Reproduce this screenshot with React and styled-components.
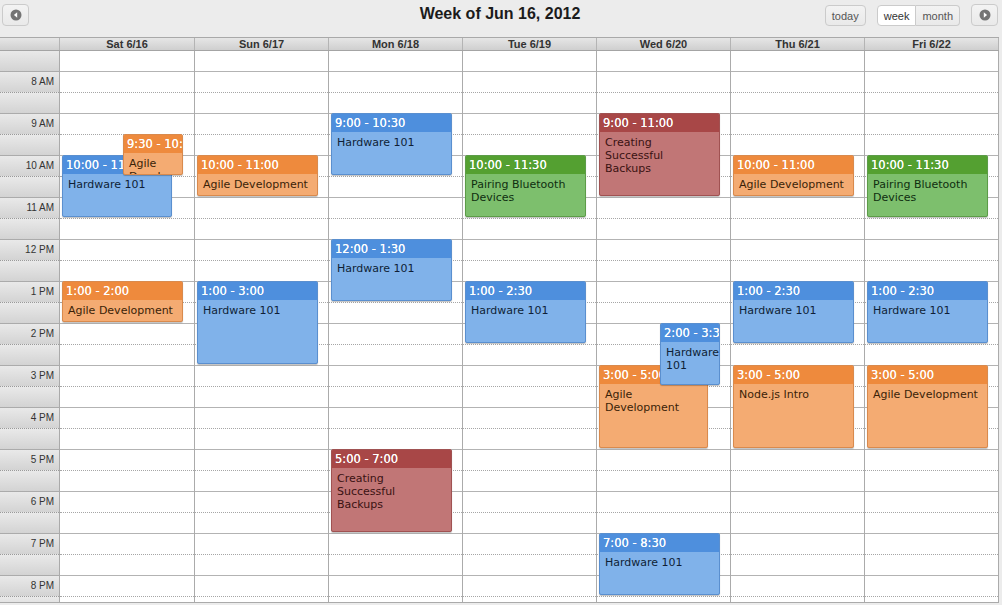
import React from "react";
import styled, { createGlobalStyle } from "styled-components";

const GlobalStyle = createGlobalStyle`
  html, body {
    margin: 0;
    padding: 0;
    background: #ececec;
  }
  body {
    font-family: "Liberation Sans", Arial, sans-serif;
  }
`;

const palette = {
  blue: { head: "#4e8fdd", body: "#80b2ea", edge: "#5a8fcf", text: "#0f1f36" },
  orange: { head: "#ee8a3d", body: "#f4ab72", edge: "#d98a4d", text: "#3b1f08" },
  green: { head: "#54a031", body: "#7dbf6d", edge: "#5c9c48", text: "#0f2e10" },
  red: { head: "#a84747", body: "#c17676", edge: "#a05252", text: "#3a1212" },
};

const days = [
  {
    label: "Sat 6/16",
    events: [
      { start: 10, end: 11.5, time: "10:00 - 11:30", title: "Hardware 101", color: "blue", left: 2, width: 110 },
      { start: 9.5, end: 10.5, time: "9:30 - 10:30", title: "Agile Development", color: "orange", left: 63, width: 60 },
      { start: 13, end: 14, time: "1:00 - 2:00", title: "Agile Development", color: "orange" },
    ],
  },
  {
    label: "Sun 6/17",
    events: [
      { start: 10, end: 11, time: "10:00 - 11:00", title: "Agile Development", color: "orange" },
      { start: 13, end: 15, time: "1:00 - 3:00", title: "Hardware 101", color: "blue" },
    ],
  },
  {
    label: "Mon 6/18",
    events: [
      { start: 9, end: 10.5, time: "9:00 - 10:30", title: "Hardware 101", color: "blue" },
      { start: 12, end: 13.5, time: "12:00 - 1:30", title: "Hardware 101", color: "blue" },
      { start: 17, end: 19, time: "5:00 - 7:00", title: "Creating Successful Backups", color: "red" },
    ],
  },
  {
    label: "Tue 6/19",
    events: [
      { start: 10, end: 11.5, time: "10:00 - 11:30", title: "Pairing Bluetooth Devices", color: "green" },
      { start: 13, end: 14.5, time: "1:00 - 2:30", title: "Hardware 101", color: "blue" },
    ],
  },
  {
    label: "Wed 6/20",
    events: [
      { start: 9, end: 11, time: "9:00 - 11:00", title: "Creating Successful Backups", color: "red" },
      { start: 15, end: 17, time: "3:00 - 5:00", title: "Agile Development", color: "orange", left: 2, width: 109 },
      { start: 14, end: 15.5, time: "2:00 - 3:30", title: "Hardware 101", color: "blue", left: 63, width: 60 },
      { start: 19, end: 20.5, time: "7:00 - 8:30", title: "Hardware 101", color: "blue" },
    ],
  },
  {
    label: "Thu 6/21",
    events: [
      { start: 10, end: 11, time: "10:00 - 11:00", title: "Agile Development", color: "orange" },
      { start: 13, end: 14.5, time: "1:00 - 2:30", title: "Hardware 101", color: "blue" },
      { start: 15, end: 17, time: "3:00 - 5:00", title: "Node.js Intro", color: "orange" },
    ],
  },
  {
    label: "Fri 6/22",
    events: [
      { start: 10, end: 11.5, time: "10:00 - 11:30", title: "Pairing Bluetooth Devices", color: "green" },
      { start: 13, end: 14.5, time: "1:00 - 2:30", title: "Hardware 101", color: "blue" },
      { start: 15, end: 17, time: "3:00 - 5:00", title: "Agile Development", color: "orange" },
    ],
  },
];

const hourLabels = ["8 AM", "9 AM", "10 AM", "11 AM", "12 PM", "1 PM", "2 PM", "3 PM", "4 PM", "5 PM", "6 PM", "7 PM", "8 PM"];

// one half-hour slot before 8 AM, then a labelled and an unlabelled slot per hour
const slots = [{ label: "", dotted: false }];
hourLabels.forEach((h) => {
  slots.push({ label: h, dotted: true });
  slots.push({ label: "", dotted: false });
});

const SLOT = 21;
const slotIndex = (h) => (h - 7.5) * 2;

const PrevIcon = () => (
  <svg width="12" height="12" viewBox="0 0 12 12">
    <circle cx="6" cy="6" r="5.5" fill="#747474" />
    <path d="M7.2 3.3 L7.2 8.7 L3.9 6 Z" fill="#fff" />
  </svg>
);

const NextIcon = () => (
  <svg width="12" height="12" viewBox="0 0 12 12">
    <circle cx="6" cy="6" r="5.5" fill="#747474" />
    <path d="M4.8 3.3 L4.8 8.7 L8.1 6 Z" fill="#fff" />
  </svg>
);

const App = () => {
  return (
    <Page>
      <GlobalStyle />
      <Toolbar>
        <Side>
          <ArrowButton aria-label="previous">
            <PrevIcon />
          </ArrowButton>
        </Side>
        <Title>Week of Jun 16, 2012</Title>
        <Side $right>
          <Button>today</Button>
          <ButtonGroup>
            <GroupButton $active $first>week</GroupButton>
            <GroupButton>month</GroupButton>
          </ButtonGroup>
          <ArrowButton aria-label="next">
            <NextIcon />
          </ArrowButton>
        </Side>
      </Toolbar>

      <Calendar>
        <HeaderRow>
          <HeaderCell />
          {days.map((d) => (
            <HeaderCell key={d.label}>{d.label}</HeaderCell>
          ))}
        </HeaderRow>

        <Body>
          <Axis>
            {slots.map((s, i) => (
              <AxisCell key={i} $dotted={s.dotted}>
                {s.label}
              </AxisCell>
            ))}
          </Axis>

          {days.map((d) => (
            <DayColumn key={d.label}>
              {slots.map((s, i) => (
                <Slot key={i} $dotted={s.dotted} />
              ))}
              {d.events.map((ev, i) => {
                const c = palette[ev.color];
                return (
                  <Event
                    key={i}
                    $body={c.body}
                    $edge={c.edge}
                    style={{
                      top: SLOT * slotIndex(ev.start) - 1,
                      height: (ev.end - ev.start) * 2 * SLOT - 1,
                      left: ev.left ?? 2,
                      width: ev.width ?? 121,
                    }}
                  >
                    <EventTime $head={c.head}>{ev.time}</EventTime>
                    <EventTitle $text={c.text}>{ev.title}</EventTitle>
                  </Event>
                );
              })}
            </DayColumn>
          ))}
        </Body>
      </Calendar>
    </Page>
  );
};

export default App;

const Page = styled.div`
  width: 999px;
`;

const Toolbar = styled.div`
  display: grid;
  grid-template-columns: 1fr auto 1fr;
  align-items: start;
  height: 37px;
  padding: 4px 1px 0 2px;
  box-sizing: border-box;
  background: #ececec;
`;

const Side = styled.div`
  display: flex;
  gap: 11px;
  justify-content: ${(p) => (p.$right ? "flex-end" : "flex-start")};
`;

const Title = styled.h2`
  margin: 0;
  font-family: "Liberation Sans", Arial, sans-serif;
  font-size: 16px;
  line-height: 19px;
  font-weight: bold;
  color: #1b1b1b;
`;

const Button = styled.button`
  height: 21px;
  padding: 0 6px;
  margin-top: 1px;
  border: 1px solid #cbcbcb;
  border-radius: 4px;
  background: linear-gradient(#f3f3f3, #e9e9e9);
  font-family: "Liberation Sans", Arial, sans-serif;
  font-size: 11px;
  color: #555;
  cursor: pointer;
`;

const ArrowButton = styled(Button)`
  width: 27px;
  height: 22px;
  margin-top: 0;
  padding: 0;
  display: flex;
  align-items: center;
  justify-content: center;
`;

const ButtonGroup = styled.div`
  display: flex;
  margin-top: 1px;
`;

const GroupButton = styled.button`
  height: 21px;
  padding: 0 6px;
  border: 1px solid #cbcbcb;
  border-left: ${(p) => (p.$first ? "1px solid #cbcbcb" : "none")};
  border-radius: ${(p) => (p.$first ? "4px 0 0 4px" : "0 4px 4px 0")};
  background: ${(p) => (p.$active ? "#fff" : "linear-gradient(#f3f3f3, #e9e9e9)")};
  font-family: "Liberation Sans", Arial, sans-serif;
  font-size: 11px;
  color: ${(p) => (p.$active ? "#333" : "#555")};
  cursor: pointer;
`;

const Calendar = styled.div`
  border-top: 1px solid #a9a9a9;
  background: #fff;
`;

const HeaderRow = styled.div`
  display: grid;
  grid-template-columns: 60px 135px repeat(6, 134px);
  border-bottom: 1px solid #a4a4a4;
`;

const HeaderCell = styled.div`
  height: 12px;
  line-height: 12px;
  border-right: 1px solid #b4b4b4;
  background: linear-gradient(#e6e6e6, #cfcfcf);
  text-align: center;
  font-size: 11px;
  font-weight: bold;
  color: #333;
`;

const Body = styled.div`
  display: grid;
  grid-template-columns: 60px 135px repeat(6, 134px);
  height: 551px;
  overflow: hidden;
  border-bottom: 1px solid #aaa;
`;

const Axis = styled.div`
  display: flex;
  flex-direction: column;
  border-right: 1px solid #aaa;
`;

const AxisCell = styled.div`
  flex: none;
  height: 20px;
  line-height: 20px;
  padding-right: 5px;
  text-align: right;
  font-size: 10px;
  color: #333;
  background: linear-gradient(#e9e9e9, #d3d3d3);
  border-bottom: 1px ${(p) => (p.$dotted ? "dotted #9a9a9a" : "solid #ababab")};
`;

const DayColumn = styled.div`
  position: relative;
  display: flex;
  flex-direction: column;
  border-right: 1px solid #ababab;
`;

const Slot = styled.div`
  flex: none;
  height: 20px;
  border-bottom: 1px ${(p) => (p.$dotted ? "dotted #a6a6a6" : "solid #b3b3b3")};
`;

const Event = styled.div`
  position: absolute;
  box-sizing: border-box;
  overflow: hidden;
  background: ${(p) => p.$body};
  border: 1px solid ${(p) => p.$edge};
  border-radius: 2px;
  box-shadow: 0 1px 1px rgba(0, 0, 0, 0.25);
  font-family: "DejaVu Sans", Verdana, sans-serif;
`;

const EventTime = styled.div`
  height: 18px;
  line-height: 18px;
  padding: 0 3px;
  background: ${(p) => p.$head};
  color: #fff;
  font-size: 11.5px;
  white-space: nowrap;
  overflow: hidden;
  text-shadow: 0 0 0.4px #fff;
`;

const EventTitle = styled.div`
  padding: 4px 7px 0 5px;
  font-size: 11px;
  line-height: 13px;
  color: ${(p) => p.$text};
`;
